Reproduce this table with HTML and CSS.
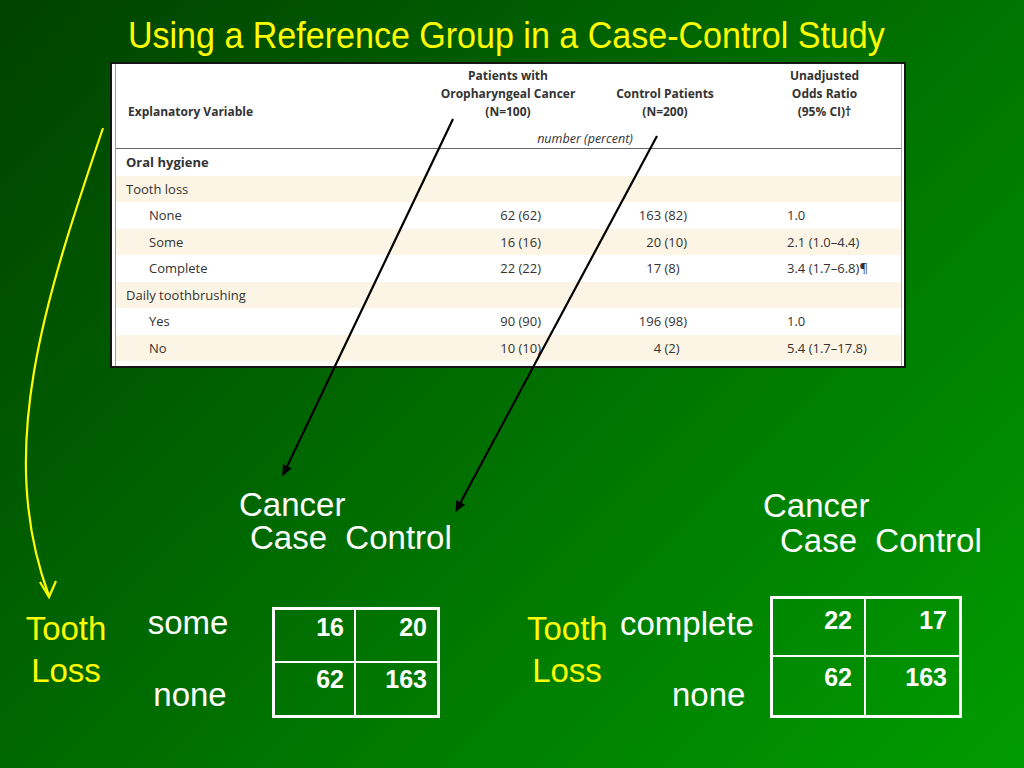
FILE: index.html
```html
<!DOCTYPE html>
<html>
<head>
<meta charset="utf-8">
<link rel="stylesheet" href="styles.css">
</head>
<body>
<div class="slide">
  <h1 class="title"><span class="title-text">Using a Reference Group in a Case-Control Study</span></h1>

  <div class="nejm">
    <div class="nejm-inner">
      <div class="nejm-head">
        <div class="hgrid">
          <div class="h h-var">Explanatory Variable</div>
          <div class="h">Patients with<br>Oropharyngeal Cancer<br>(N=100)</div>
          <div class="h">Control Patients<br>(N=200)</div>
          <div class="h h-or">Unadjusted<br>Odds Ratio<br>(95% CI)†</div>
        </div>
        <div class="unit">number (percent)</div>
      </div>
      <div class="row"><span class="c1 group">Oral hygiene</span></div>
      <div class="row alt"><span class="c1">Tooth loss</span></div>
      <div class="row"><span class="c1 sub">None</span><span class="c2">62 (62)</span><span class="c3">163 (82)</span><span class="c4">1.0</span></div>
      <div class="row alt"><span class="c1 sub">Some</span><span class="c2">16 (16)</span><span class="c3">20 (10)</span><span class="c4">2.1 (1.0–4.4)</span></div>
      <div class="row"><span class="c1 sub">Complete</span><span class="c2">22 (22)</span><span class="c3">17 (8)&#8199;</span><span class="c4">3.4 (1.7–6.8)¶</span></div>
      <div class="row alt"><span class="c1">Daily toothbrushing</span></div>
      <div class="row"><span class="c1 sub">Yes</span><span class="c2">90 (90)</span><span class="c3">196 (98)</span><span class="c4">1.0</span></div>
      <div class="row alt"><span class="c1 sub">No</span><span class="c2">10 (10)</span><span class="c3">4 (2)&#8199;</span><span class="c4">5.4 (1.7–17.8)</span></div>
    </div>
  </div>

  <div class="bottom">
    <div class="panel panel-left">
      <div class="heading">
        <div class="hl1">Cancer</div>
        <div class="hl2">Case&nbsp; Control</div>
      </div>
      <div class="body">
        <div class="axis">Tooth<br>Loss</div>
        <div class="levels">
          <div class="lv lv-top">some</div>
          <div class="lv lv-bot">none</div>
        </div>
        <div class="ct">
          <div class="cell">16</div>
          <div class="cell">20</div>
          <div class="cell">62</div>
          <div class="cell">163</div>
        </div>
      </div>
    </div>
    <div class="panel panel-right">
      <div class="heading">
        <div class="hl1">Cancer</div>
        <div class="hl2">Case&nbsp; Control</div>
      </div>
      <div class="body">
        <div class="axis">Tooth<br>Loss</div>
        <div class="levels">
          <div class="lv lv-top">complete</div>
          <div class="lv lv-bot">none</div>
        </div>
        <div class="ct">
          <div class="cell">22</div>
          <div class="cell">17</div>
          <div class="cell">62</div>
          <div class="cell">163</div>
        </div>
      </div>
    </div>
  </div>

  <svg class="arrows" width="1024" height="768" viewBox="0 0 1024 768">
    <defs>
      <marker id="bk" markerWidth="12" markerHeight="10" refX="10" refY="5" orient="auto" markerUnits="userSpaceOnUse">
        <path d="M0,0 L11,5 L0,10 Z" fill="#000"/>
      </marker>
    </defs>
    <line x1="453" y1="119" x2="283" y2="475" stroke="#000" stroke-width="2.2" marker-end="url(#bk)"/>
    <line x1="657" y1="136" x2="456" y2="511" stroke="#000" stroke-width="2.2" marker-end="url(#bk)"/>
    <path d="M103,128 C45,300 -5,450 49,596" fill="none" stroke="#ffff00" stroke-width="2.2"/>
    <path d="M40,582 L49,597 L56,581" fill="none" stroke="#ffff00" stroke-width="2.2"/>
  </svg>
</div>
</body>
</html>
```

FILE: styles.css
```css
html, body {
  margin: 0;
  padding: 0;
}
body {
  font-family: "Liberation Sans", Arial, sans-serif;
}
.slide {
  position: relative;
  width: 1024px;
  height: 768px;
  overflow: hidden;
  background: linear-gradient(135deg, #004200 0%, #006e00 50%, #009c00 100%);
}
.title {
  margin: 0;
  height: 62px;
  padding-right: 12px;
  box-sizing: border-box;
  text-align: center;
  font-family: "Liberation Sans", sans-serif;
  font-weight: normal;
  font-size: 37px;
  line-height: 72px;
  color: #ffff00;
  white-space: nowrap;
}
.title-text {
  display: inline-block;
  transform: scaleX(0.92);
}

/* NEJM table image */
.nejm {
  margin-left: 110px;
  width: 796px;
  height: 306px;
  box-sizing: border-box;
  border: 2px solid #151515;
  background: #fff;
  font-family: "Open Sans", "DejaVu Sans", sans-serif;
  color: #333;
}
.nejm-inner {
  margin-left: 3px;
  margin-right: 2px;
  height: 100%;
  border-left: 1px solid #a0a0a0;
  border-right: 1px solid #a8a8a8;
}
.nejm-head {
  padding-top: 3px;
  border-bottom: 1px solid #666;
  height: 85px;
  box-sizing: border-box;
}
.hgrid {
  display: grid;
  grid-template-columns: 304px 176px 138px 1fr;
  font-size: 12px;
  font-weight: 700;
  line-height: 18px;
  height: 54px;
}
.h {
  text-align: center;
  align-self: end;
}
.h-var {
  text-align: left;
  padding-left: 12px;
}
.h-or {
  padding-left: 14px;
}
.unit {
  margin-top: 9px;
  margin-left: 304px;
  width: 314px;
  padding-left: 16px;
  box-sizing: border-box;
  text-align: center;
  font-style: italic;
  font-size: 12.5px;
  line-height: 18px;
}
.row {
  display: grid;
  grid-template-columns: 304px 121px 146px 1fr;
  height: 26.5px;
  align-items: center;
  font-size: 13px;
}
.row.alt {
  background: #fcf5e6;
}
.c1 {
  padding-left: 10px;
}
.c1.sub {
  padding-left: 33px;
}
.c1.group {
  font-weight: 700;
}
.c2, .c3 {
  text-align: right;
}
.c4 {
  padding-left: 100px;
}

/* bottom */
.bottom {
  display: flex;
  margin-top: 120px;
  color: #fff;
  font-size: 33px;
}
.panel {
  width: 512px;
}
.hl1, .hl2 {
  line-height: 33px;
}
.panel-left .heading {
  padding-left: 239px;
}
.panel-left .hl2 {
  padding-left: 11px;
}
.panel-right .heading {
  padding-left: 251px;
}
.panel-right .hl1, .panel-right .hl2 {
  line-height: 35px;
}
.panel-right .hl2 {
  padding-left: 17px;
}
.body {
  display: flex;
  align-items: flex-start;
}
.axis {
  color: #ffff00;
  text-align: center;
  line-height: 42px;
}
.lv {
  line-height: 34px;
  text-align: center;
}
.ct {
  display: grid;
  grid-template-columns: 1fr 1fr;
  grid-template-rows: 1fr 1fr;
  box-sizing: border-box;
  border: 3px solid #fff;
}
.cell {
  font-weight: 700;
  font-size: 25px;
  line-height: 25px;
  text-align: right;
}
.cell:nth-child(odd) {
  border-right: 2px solid #fff;
}
.cell:nth-child(-n+2) {
  border-bottom: 2px solid #fff;
}

/* left panel geometry */
.panel-left .body {
  margin-top: 52px;
}
.panel-left .axis {
  width: 132px;
  margin-top: 2px;
}
.panel-left .levels {
  width: 82px;
  margin-left: 15px;
}
.panel-left .lv-bot {
  margin-top: 38px;
  padding-left: 4px;
}
.panel-left .ct {
  margin-left: 43px;
  margin-top: 1px;
  width: 168px;
  height: 111px;
}
.panel-left .cell {
  padding: 5px 10px 0 0;
}
.panel-left .cell:nth-child(n+3) {
  padding-top: 4px;
}

/* right panel geometry */
.panel-right .body {
  margin-top: 38px;
}
.panel-right .axis {
  width: 80px;
  margin-left: 15px;
  margin-top: 12px;
}
.panel-right .levels {
  margin-left: 13px;
  margin-top: 11px;
  width: 140px;
}
.panel-right .lv-top {
  text-align: left;
}
.panel-right .lv-bot {
  text-align: left;
  margin-top: 37px;
  padding-left: 52px;
}
.panel-right .ct {
  margin-left: 10px;
  width: 192px;
  height: 122px;
}
.panel-right .cell {
  padding: 9px 12px 0 0;
}
.panel-right .cell:nth-child(n+3) {
  padding-top: 8px;
}

.arrows {
  position: absolute;
  left: 0;
  top: 0;
  pointer-events: none;
}
```
